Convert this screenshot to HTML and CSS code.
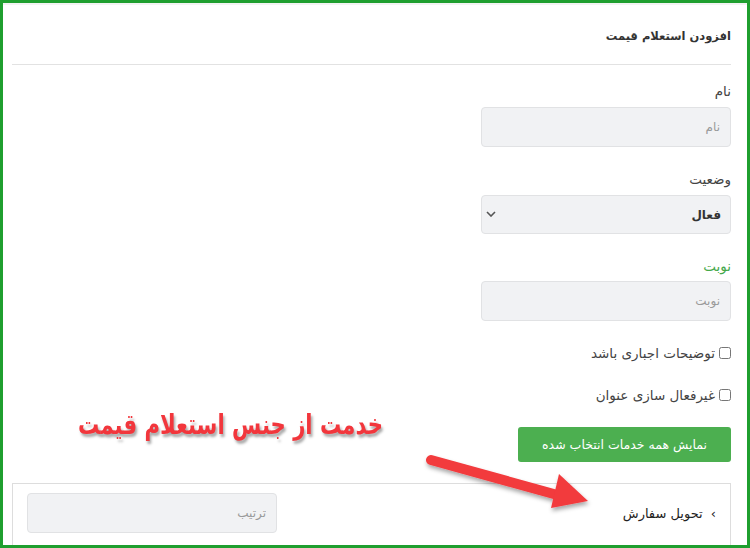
FILE: index.html
```html
<!DOCTYPE html>
<html lang="fa" dir="rtl">
<head>
    <meta charset="UTF-8">
    <meta name="viewport" content="width=device-width, initial-scale=1.0">
    <title>افزودن استعلام قیمت</title>
    <link rel="stylesheet" href="styles.css">
</head>
<body>
    <div class="frame">
        <div class="card">
            <div class="card-header">افزودن استعلام قیمت</div>

            <div class="form-group">
                <label for="name">نام</label>
                <input type="text" id="name" placeholder="نام">
            </div>

            <div class="form-group">
                <label for="status">وضعیت</label>
                <div class="select-wrap">
                    <select id="status">
                        <option>فعال</option>
                        <option>غیرفعال</option>
                    </select>
                    <svg class="select-arrow" width="10" height="6" viewBox="0 0 10 6"><path d="M1 1l4 4 4-4" fill="none" stroke="#555" stroke-width="1.6"/></svg>
                </div>
            </div>

            <div class="form-group">
                <label for="turn" class="label-green">نوبت</label>
                <input type="text" id="turn" placeholder="نوبت">
            </div>

            <div class="check-row">
                <label><input type="checkbox"> توضیحات اجباری باشد</label>
            </div>
            <div class="check-row">
                <label><input type="checkbox"> غیرفعال سازی عنوان</label>
            </div>

            <div class="btn-row">
                <button class="btn-green">نمایش همه خدمات انتخاب شده</button>
            </div>

            <div class="panel">
                <div class="panel-row">
                    <span class="panel-title"><span class="chev">›</span> تحویل سفارش</span>
                    <input type="text" class="order-input" placeholder="ترتیب">
                </div>
            </div>
        </div>

        <!-- annotation drawn over the screenshot -->
        <div class="note">خدمت از جنس استعلام قیمت</div>
        <svg class="note-arrow" width="200" height="70" viewBox="0 0 200 70">
            <defs>
                <filter id="sh" x="-20%" y="-40%" width="140%" height="180%">
                    <feDropShadow dx="1" dy="3" stdDeviation="2" flood-color="#000" flood-opacity="0.35"/>
                </filter>
            </defs>
            <g filter="url(#sh)" fill="#f23a3e">
                <path d="M8 14 L138 50" stroke="#f23a3e" stroke-width="10" stroke-linecap="round"/>
                <polygon points="136,28 165,55 128,62"/>
            </g>
        </svg>
    </div>
</body>
</html>
```

FILE: styles.css
```css
html, body {
    margin: 0;
    padding: 0;
}

body {
    font-family: "DejaVu Sans", sans-serif;
    font-size: 13px;
    color: #333;
    background-color: #fff;
}

.frame {
    position: relative;
    width: 750px;
    height: 548px;
    box-sizing: border-box;
    border: 3px solid #1f9f2f;
    padding-top: 2px;
    background-color: #f3f3f3;
    overflow: hidden;
}

.card {
    background-color: white;
    height: 100%;
    padding: 0 16px 0 9px;
}

.card-header {
    height: 59px;
    line-height: 63px;
    font-weight: bold;
    font-size: 11.5px;
    border-bottom: 1px solid #e2e2e2;
    margin-bottom: 16px;
    color: #333;
}

.form-group {
    margin-bottom: 22px;
}

.form-group label {
    display: block;
    height: 20px;
    line-height: 20px;
    margin-bottom: 6px;
    color: #444;
    font-size: 13.5px;
}

.form-group .label-green {
    color: #45a84a;
    margin-bottom: 5px;
}

input[type="text"], select {
    width: 250px;
    height: 40px;
    box-sizing: border-box;
    padding: 0 10px;
    background-color: #f1f2f4;
    border: 1px solid #e1e2e4;
    border-radius: 4px;
    font-family: inherit;
    font-size: 12px;
    color: #333;
    outline: none;
}

input::placeholder {
    color: #9a9a9a;
}

.select-wrap {
    position: relative;
    width: 250px;
    height: 39px;
}

select {
    height: 39px;
    appearance: none;
    -webkit-appearance: none;
    font-weight: bold;
    font-size: 12px;
    padding-right: 9px;
}

.select-arrow {
    position: absolute;
    left: 5px;
    top: 16px;
}

.check-row {
    height: 20px;
    line-height: 20px;
    margin-bottom: 22px;
    color: #444;
    font-size: 13.5px;
}

.check-row label {
    display: flex;
    align-items: center;
    gap: 4px;
}

.check-row input {
    width: 12px;
    height: 12px;
    margin: 0;
}

.btn-row {
    margin-bottom: 21px;
}

.btn-green {
    height: 35px;
    width: 213px;
    background-color: #4caf50;
    color: white;
    border: none;
    border-radius: 3px;
    font-family: inherit;
    font-size: 12.5px;
    cursor: pointer;
}

.panel {
    border: 1px solid #ddd;
    height: 80px;
}

.panel-row {
    display: flex;
    align-items: center;
    justify-content: space-between;
    padding: 9px 14px 0 14px;
}

.panel-title {
    font-size: 13px;
    color: #222;
}

.chev {
    margin-left: 4px;
}

.order-input {
    width: 250px;
    height: 40px;
}

.note {
    position: absolute;
    left: 75px;
    top: 405px;
    font-family: "DejaVu Sans Condensed", "DejaVu Sans", sans-serif;
    font-weight: bold;
    font-size: 28px;
    color: #f2363c;
    text-shadow: 2px 3px 3px rgba(0,0,0,0.35);
    transform: scaleX(0.84);
    transform-origin: left center;
}

.note-arrow {
    position: absolute;
    left: 420px;
    top: 443px;
}
```
